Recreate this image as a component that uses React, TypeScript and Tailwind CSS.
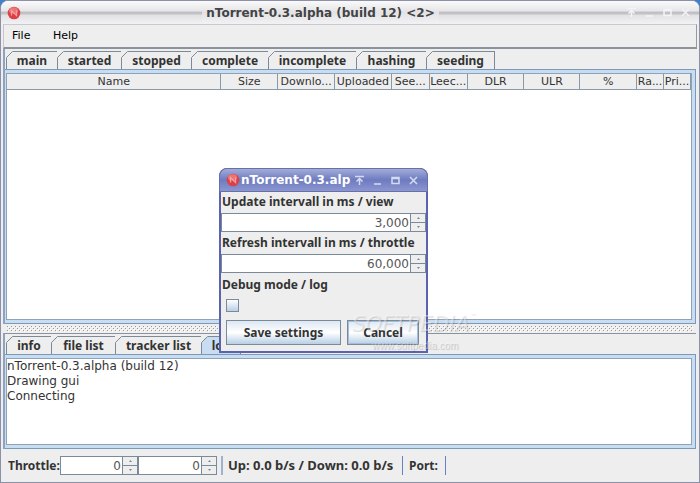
import type { ReactNode } from 'react';

const columns = [
  { label: 'Name', width: 215 },
  { label: 'Size', width: 57 },
  { label: 'Downlo...', width: 57 },
  { label: 'Uploaded', width: 57 },
  { label: 'See...', width: 38 },
  { label: 'Leec...', width: 38 },
  { label: 'DLR', width: 57 },
  { label: 'ULR', width: 56 },
  { label: '%', width: 57 },
  { label: 'Ra...', width: 27 },
  { label: 'Pri...', width: 27 },
];

const viewTabs = [
  { label: 'main', width: 'w-[52px]' },
  { label: 'started', width: 'w-[64px]' },
  { label: 'stopped', width: 'w-[70px]' },
  { label: 'complete', width: 'w-[77px]' },
  { label: 'incomplete', width: 'w-[88px]' },
  { label: 'hashing', width: 'w-[70px]' },
  { label: 'seeding', width: 'w-[68px]' },
];

const detailTabs = [
  { label: 'info', width: 'w-[46px]' },
  { label: 'file list', width: 'w-[64px]' },
  { label: 'tracker list', width: 'w-[86px]' },
  { label: 'log', width: 'w-[39px]' },
];

const logLines = ['nTorrent-0.3.alpha (build 12)', 'Drawing gui', 'Connecting'];

export default function App() {
  return (
    <div className="bg-[#3f7fcc] font-['Noto_Sans',sans-serif] text-xs text-[#333]">
      <div className="relative flex min-h-screen flex-col overflow-hidden rounded-t-lg border border-[#8c90a8] bg-[#eee]">
        <TitleBar />
        <div className="mx-0.5 flex flex-1 flex-col">
          <nav className="flex h-[25px] items-center border border-t-[#c9c9d0] border-r-[#999] border-b-2 border-b-[#8c9299] border-l-[#c9c3cf] pl-2 font-['DejaVu_Sans',sans-serif] text-[11px] text-black">
            <button type="button" className="w-[41px] text-left">File</button>
            <button type="button">Help</button>
          </nav>

          <div className="mr-px flex flex-1 flex-col border-l-2 border-[#8fa3c0] pt-0.5">
            <Tabs tabs={viewTabs} selected="main" />
            <Panel className="flex-1">
              <table className="w-full table-fixed border-separate border-spacing-0 font-['DejaVu_Sans',sans-serif] text-[11px]">
                <colgroup>
                  {columns.map((c) => (
                    <col key={c.label} style={{ width: `${(c.width / 686) * 100}%` }} />
                  ))}
                </colgroup>
                <thead>
                  <tr>
                    {columns.map((c) => (
                      <th
                        key={c.label}
                        className="overflow-hidden border-r border-b border-[#8a99a8] bg-[#eee] p-0 text-center leading-[15px] font-normal whitespace-nowrap"
                      >
                        {c.label}
                      </th>
                    ))}
                  </tr>
                </thead>
              </table>
            </Panel>
          </div>

          <Divider />

          <div className="mr-px flex flex-col border-t border-l-2 border-t-[#8b949c] border-l-[#8fa3c0] pt-0.5">
            <Tabs tabs={detailTabs} selected="log" focused />
            <Panel>
              <div className="h-[85px] font-['DejaVu_Sans',sans-serif] text-[12px] leading-[15px]">
                {logLines.map((line) => (
                  <p key={line}>{line}</p>
                ))}
              </div>
            </Panel>
          </div>

          <StatusBar />
        </div>
      </div>
      <SettingsDialog />
      <Watermark />
    </div>
  );
}

function Logo() {
  return (
    <svg width="14" height="14" viewBox="0 0 14 14" className="shrink-0">
      <circle cx="7" cy="7" r="6.3" fill="#dc4046" />
      <ellipse cx="6.5" cy="4.5" rx="4.5" ry="3.2" fill="#f28a8a" opacity=".7" />
      <path d="M4.5 9.5V4.5l5 5v-5" fill="none" stroke="#f5a09c" strokeWidth="1.3" />
    </svg>
  );
}

function WindowIcons({ faint = false }: { faint?: boolean }) {
  const icons = [
    { name: 'Shade', path: 'M1 1.5h9M5.5 10V4M2.5 6.5l3-3 3 3' },
    { name: 'Minimize', path: 'M2 9h7' },
    { name: 'Maximize', path: 'M2 2.5h7v6H2zM2 3.5h7' },
    { name: 'Close', path: 'M2 2l7 7M9 2L2 9' },
  ];
  return (
    <div className={faint ? 'flex gap-[7px] text-[#f4f4f6]' : 'ml-auto flex gap-[7px] text-[#d5dcf2]'}>
      {icons.map((icon) => (
        <button key={icon.name} type="button" aria-label={icon.name}>
          <svg width="11" height="11" viewBox="0 0 11 11" fill="none" stroke="currentColor" strokeWidth="1.5">
            <path d={icon.path} />
          </svg>
        </button>
      ))}
    </div>
  );
}

function TitleBar() {
  return (
    <header className="flex h-[23px] items-center bg-[linear-gradient(#fafafa,#e6e6e8_44%,#bebec2_48%,#c4c4c8_56%,#e2e2e5_62%,#f2f2f5)] pr-2 pl-1.5">
      <Logo />
      <div className="flex h-full flex-1 items-center justify-center pr-1.5">
        <h1 className="flex h-full items-center bg-linear-to-b from-[#fafafa] via-[#e3e3e6] to-[#f2f2f5] px-1 font-['DejaVu_Sans',sans-serif] text-[12px] font-bold text-[#444]">
          nTorrent-0.3.alpha (build 12) &lt;2&gt;
        </h1>
      </div>
      <WindowIcons faint />
    </header>
  );
}

type Tab = { label: string; width: string };

function Tabs({ tabs, selected, focused = false }: { tabs: Tab[]; selected: string; focused?: boolean }) {
  return (
    <div role="tablist" className="flex pl-px">
      {tabs.map((tab) => {
        const fill = focused && tab.label === selected ? '#c8ddf2' : '#eeeeee';
        return (
          <button
            key={tab.label}
            type="button"
            role="tab"
            aria-selected={tab.label === selected}
            className={`${tab.width} relative h-[18px] border-t border-r border-[#7a8a99] text-center leading-4 font-bold first:border-l`}
            style={{ backgroundColor: fill }}
          >
            {tab.label}
            <svg width="7" height="7" viewBox="0 0 7 7" className="absolute -top-px -left-px">
              <path d="M0 0h7L0 7z" fill="#eee" />
              <path d="M0.5 6.5l6-6" stroke="#7a8a99" />
            </svg>
          </button>
        );
      })}
    </div>
  );
}

function Panel({ children, className = '' }: { children: ReactNode; className?: string }) {
  return (
    <div className={`${className} flex flex-col border border-l-0 border-[#7a9ab8] bg-[#c8ddf2] pt-[3px] pr-[3px] pb-[3px] pl-px`}>
      <div className="flex-1 border border-[#8fa3b8] bg-white">{children}</div>
    </div>
  );
}

function Divider() {
  return (
    <div className="flex h-[9px] items-center px-1">
      <svg width="100%" height="6">
        <defs>
          <pattern id="dots" width="4" height="4" patternUnits="userSpaceOnUse">
            <rect width="1" height="1" fill="#999" />
            <rect x="2" y="2" width="1" height="1" fill="#999" />
            <rect x="1" y="1" width="1" height="1" fill="#fff" />
            <rect x="3" y="3" width="1" height="1" fill="#fff" />
          </pattern>
        </defs>
        <rect width="100%" height="6" fill="url(#dots)" />
      </svg>
    </div>
  );
}

function Spinner({ id, value, label, className }: { id: string; value: string; label?: string; className: string }) {
  return (
    <div className={`${className} flex h-[19px] border border-[#7a8a99] bg-white`}>
      <input
        id={id}
        aria-label={label}
        defaultValue={value}
        className="w-0 min-w-0 flex-1 pr-px text-right font-['DejaVu_Sans',sans-serif] text-[12px] leading-4 font-normal text-[#555] outline-none"
      />
      <div className="flex w-[15px] flex-col border-l border-[#7a8a99] bg-[#eee]">
        <button type="button" aria-label="Increase" className="flex flex-1 items-center justify-center border-b border-[#7a8a99]">
          <svg width="3" height="2" viewBox="0 0 3 2"><path d="M0 2l1.5-2L3 2z" fill="#7a8a99" /></svg>
        </button>
        <button type="button" aria-label="Decrease" className="flex flex-1 items-center justify-center">
          <svg width="3" height="2" viewBox="0 0 3 2"><path d="M0 0h3L1.5 2z" fill="#7a8a99" /></svg>
        </button>
      </div>
    </div>
  );
}

function StatusBar() {
  return (
    <footer className="flex h-[33px] items-center pl-[5px] font-bold">
      <span className="w-[52px]">Throttle:</span>
      <Spinner id="up" label="Upload throttle" value="0" className="w-[78px]" />
      <Spinner id="down" label="Download throttle" value="0" className="w-[79px]" />
      <span className="ml-1 h-[19px] w-[7px] border-l-2 border-[#9fb2d0]" />
      <span className="w-[174px] text-[13px]">Up: 0.0 b/s / Down: 0.0 b/s</span>
      <span className="h-[19px] w-[7px] border-l border-[#6382bf]" />
      <span className="w-[36px]">Port:</span>
      <span className="h-[19px] border-l border-[#6382bf]" />
    </footer>
  );
}

function SettingsDialog() {
  return (
    <div
      role="dialog"
      aria-label="nTorrent settings"
      className="absolute top-[168px] left-[219px] w-[209px] rounded-t-lg bg-[#5c63ae] px-0.5 pb-0.5"
    >
      <div className="-mx-0.5 flex h-6 items-center gap-px rounded-t-lg border border-[#6870a8] bg-linear-to-b from-[#a3acd8] via-[#6e7bc0] to-[#8c96d0] pr-2 pl-1.5">
        <Logo />
        <h2 className="font-['DejaVu_Sans',sans-serif] text-[12px] font-bold whitespace-nowrap text-white">
          nTorrent-0.3.alp
        </h2>
        <WindowIcons />
      </div>
      <form className="bg-[#eee] pb-1.5 font-bold" onSubmit={(e) => e.preventDefault()}>
        <label htmlFor="update" className="block h-[21px] pl-px leading-5">Update intervall in ms / view</label>
        <Spinner id="update" value="3,000" className="w-full" />
        <label htmlFor="refresh" className="block h-[22px] pl-px leading-[22px]">Refresh intervall in ms / throttle</label>
        <Spinner id="refresh" value="60,000" className="w-full" />
        <label htmlFor="debug" className="block h-[26px] pl-px leading-6">Debug mode / log</label>
        <input
          id="debug"
          type="checkbox"
          className="ml-[5px] block size-[13px] appearance-none border border-[#7a8a99] bg-linear-to-b from-white to-[#b8cfe5]"
        />
        <div className="mt-2 flex gap-1.5 px-[5px]">
          <DialogButton className="w-[115px] border-[#7a8a99]">Save settings</DialogButton>
          <DialogButton className="w-[72px] border-[#7a8a99] ring-1 ring-[#a3bddb] ring-inset">Cancel</DialogButton>
        </div>
      </form>
    </div>
  );
}

function DialogButton({ children, className }: { children: ReactNode; className: string }) {
  return (
    <button
      type="button"
      className={`${className} h-[25px] border bg-linear-to-b from-[#dde8f3] via-white to-[#b8cfe5] text-center`}
    >
      {children}
    </button>
  );
}

function Watermark() {
  return (
    <div className="pointer-events-none absolute top-[313px] left-[352px] flex w-[130px] flex-col text-white/40">
      <span className="flex font-['DejaVu_Sans',sans-serif] text-[21px] leading-[22px] italic [text-shadow:1px_1px_1px_#0002]">
        SOFTPEDIA
        <sup className="text-[7px] leading-3">™</sup>
      </span>
      <span className="pl-5 font-['Liberation_Sans',sans-serif] text-[10px] leading-[22px] [text-shadow:1px_1px_1px_#0003]">
        www.softpedia.com
      </span>
    </div>
  );
}
